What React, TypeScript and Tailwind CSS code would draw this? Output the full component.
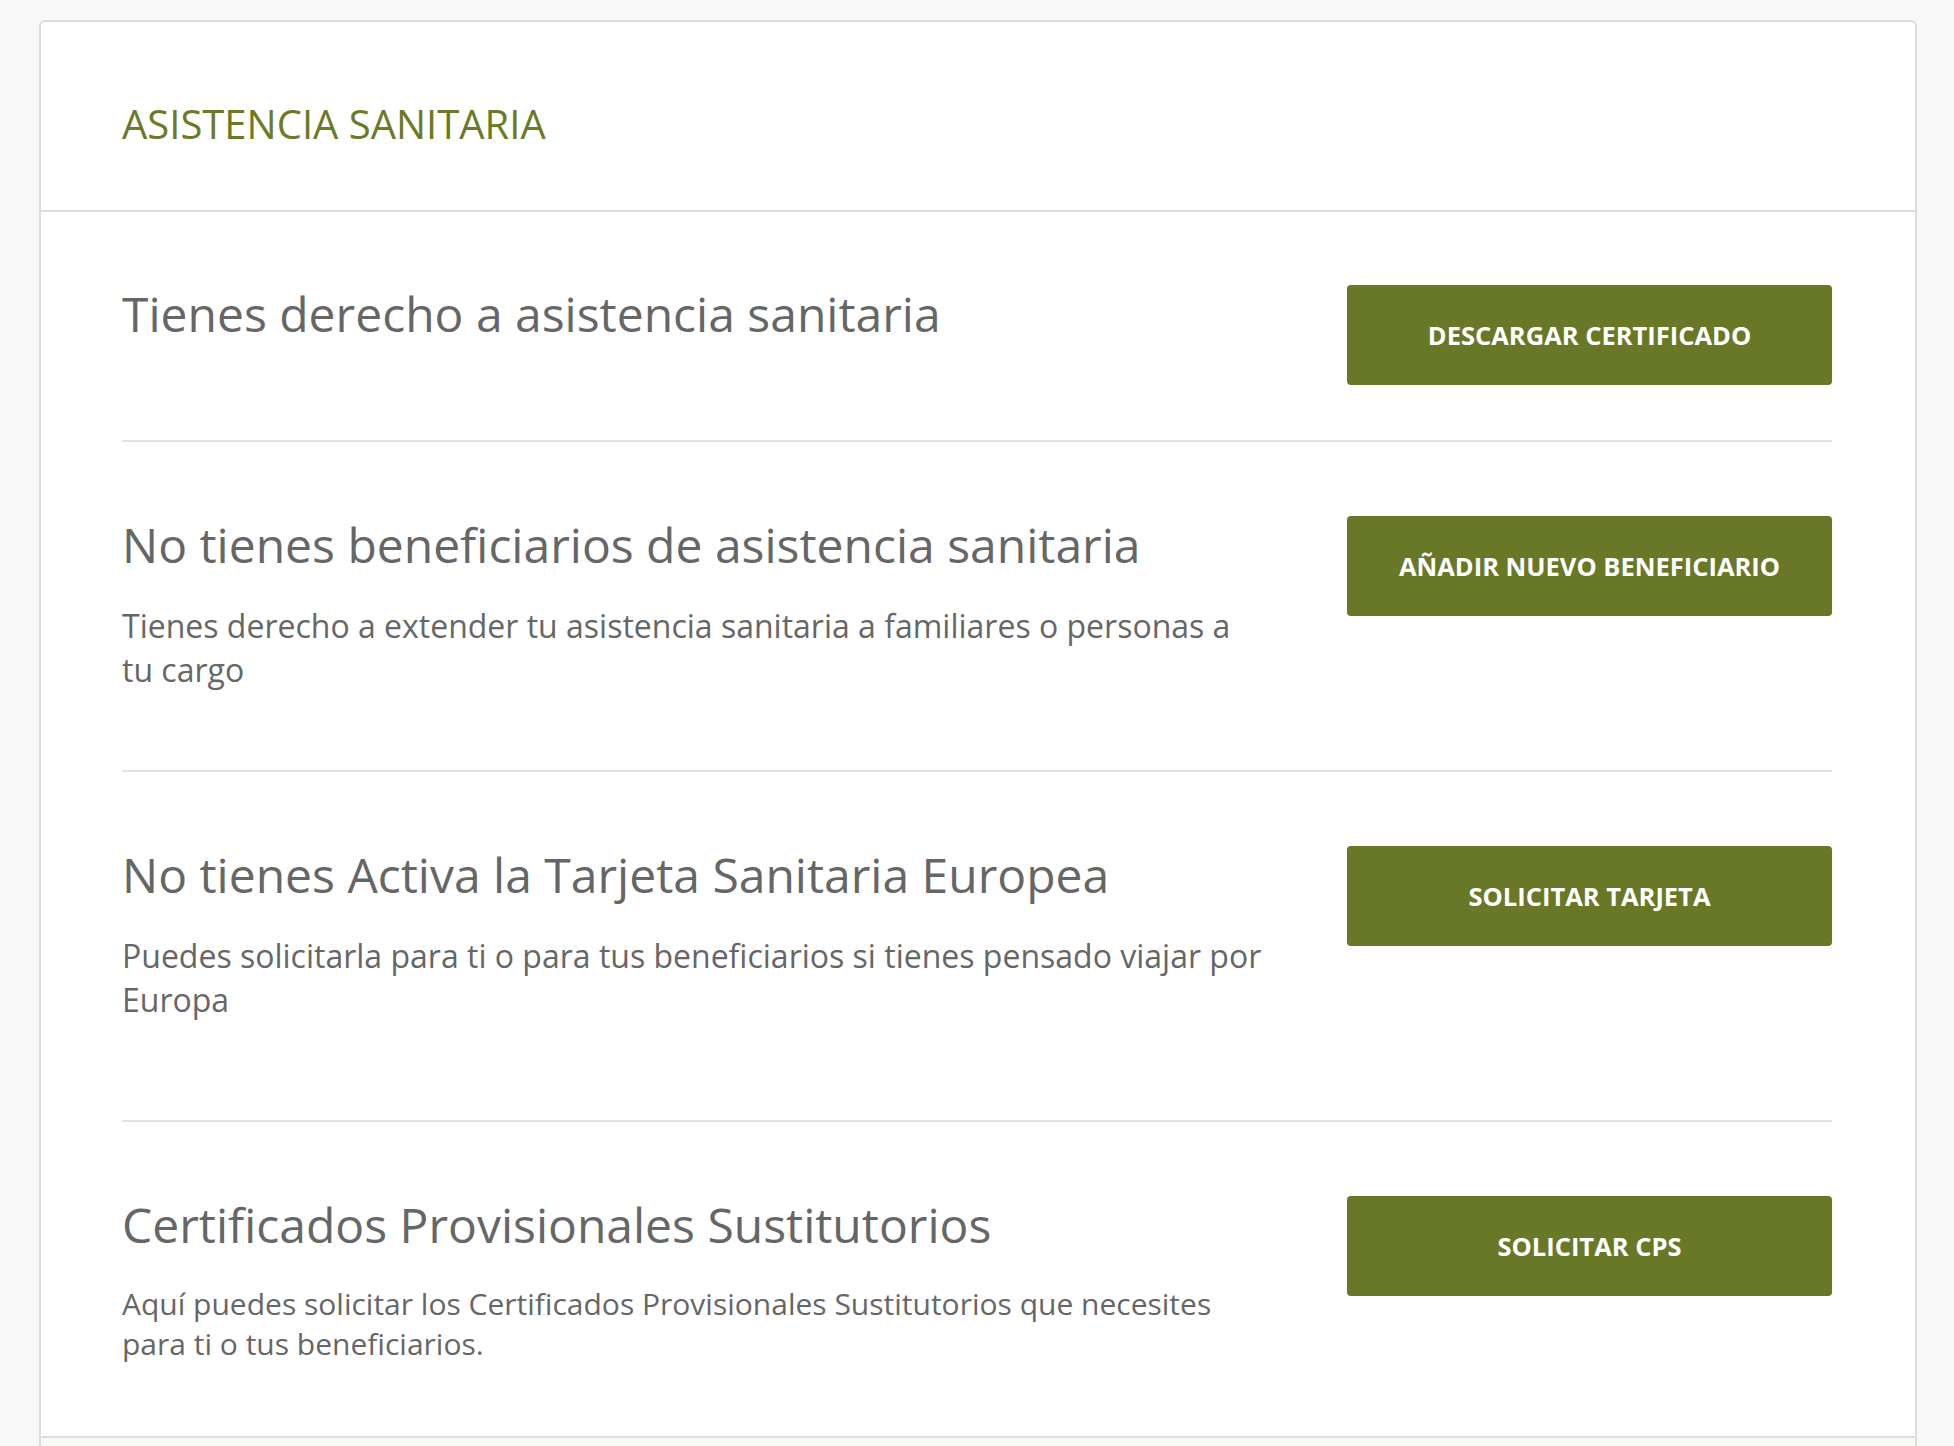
import React from "react";

type Item = {
  title: string;
  text?: string;
  small?: boolean;
  action: string;
  pad: string;
};

const items: Item[] = [
  {
    title: "Tienes derecho a asistencia sanitaria",
    action: "Descargar certificado",
    pad: "pt-[73px] pb-[55px]",
  },
  {
    title: "No tienes beneficiarios de asistencia sanitaria",
    text: "Tienes derecho a extender tu asistencia sanitaria a familiares o personas a tu cargo",
    action: "Añadir nuevo beneficiario",
    pad: "pt-[74px] pb-[78px] border-t-2 border-[#e2e2e2]",
  },
  {
    title: "No tienes Activa la Tarjeta Sanitaria Europea",
    text: "Puedes solicitarla para ti o para tus beneficiarios si tienes pensado viajar por Europa",
    action: "Solicitar tarjeta",
    pad: "pt-[74px] pb-[98px] border-t-2 border-[#e2e2e2]",
  },
  {
    title: "Certificados Provisionales Sustitutorios",
    text: "Aquí puedes solicitar los Certificados Provisionales Sustitutorios que necesites para ti o tus beneficiarios.",
    small: true,
    action: "Solicitar CPS",
    pad: "pt-[74px] pb-[72px] border-t-2 border-[#e2e2e2]",
  },
];

const Row: React.FC<{ item: Item }> = ({ item }) => {
  return (
    <div className={`flex items-start justify-between ${item.pad}`}>
      <div className="w-[1142px]">
        <h2 className="text-[48px] leading-[58px] font-normal text-[#666666]">
          {item.title}
        </h2>
        {item.text && (
          <p
            className={`mt-[30px] text-[#666666] ${
              item.small ? "text-[30px] leading-[40px]" : "text-[32px] leading-[44px]"
            }`}
          >
            {item.text}
          </p>
        )}
      </div>
      <button className="flex h-[100px] w-[485px] items-center justify-center rounded-[4px] bg-[#697827] text-[25.5px] font-bold uppercase text-white">
        {item.action}
      </button>
    </div>
  );
};

export default function App() {
  return (
    <div
      className="h-[1446px] overflow-hidden bg-[#f8f8f8] pt-[20px] pl-[39px] pr-[37px]"
      style={{ fontFamily: '"Open Sans", "Noto Sans", sans-serif' }}
    >
      <div className="rounded-t-[6px] border-2 border-[#dddddd] bg-white">
        <div className="border-b-2 border-[#dddddd] pl-[81px] pr-[83px] pt-[74px] pb-[58px]">
          <h1 className="text-[40px] leading-[56px] font-normal uppercase text-[#6b7a27]">
            Asistencia sanitaria
          </h1>
        </div>
        <div className="pl-[81px] pr-[83px]">
          {items.map((item) => (
            <Row key={item.action} item={item} />
          ))}
        </div>
        <div className="h-[120px] border-t-2 border-[#dddddd] bg-[#f9faf6]" />
      </div>
    </div>
  );
}
